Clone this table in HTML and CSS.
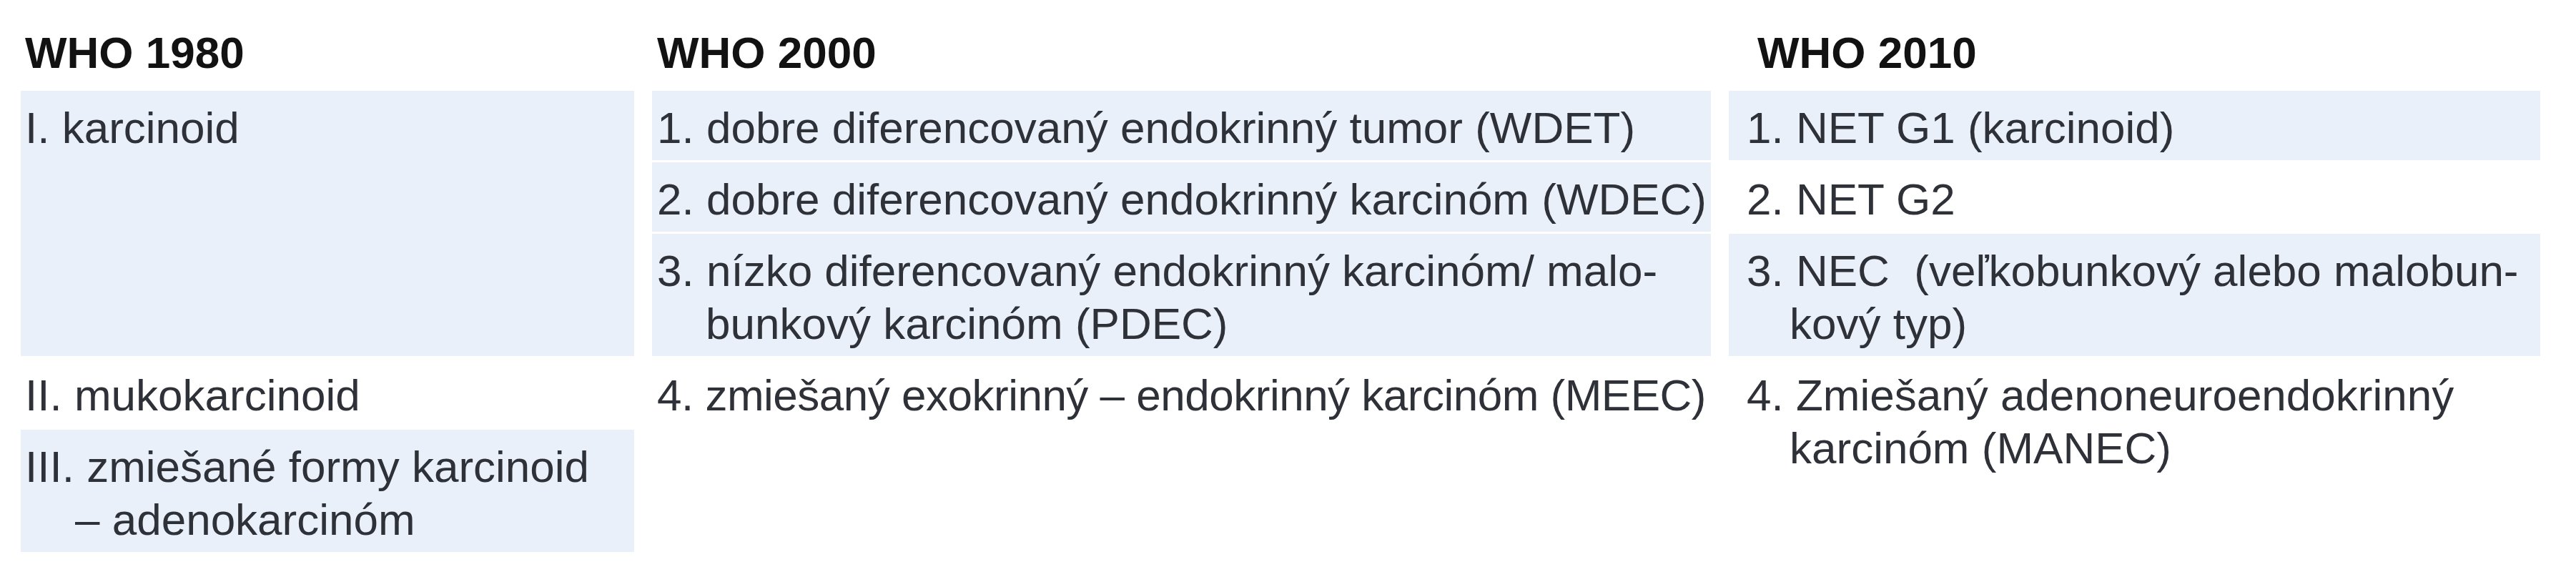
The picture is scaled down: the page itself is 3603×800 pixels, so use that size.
FILE: index.html
```html
<!DOCTYPE html>
<html lang="sk">
<head>
<meta charset="utf-8">
<title>WHO klasifikácia</title>
<link rel="stylesheet" href="styles.css">
</head>
<body>
<div class="table">
  <div class="cell head c1">WHO 1980</div>
  <div class="cell head c2">WHO 2000</div>
  <div class="cell head c3 c3h">WHO 2010</div>

  <div class="cell c1 shade span3">I. karcinoid</div>
  <div class="cell c2 shade">1. dobre diferencovaný endokrinný tumor (WDET)</div>
  <div class="cell c3 shade">1. NET G1 (karcinoid)</div>

  <div class="cell c2 shade">2. dobre diferencovaný endokrinný karcinóm (WDEC)</div>
  <div class="cell c3">2. NET G2</div>

  <div class="cell c2 shade hang">3. nízko diferencovaný endokrinný karcinóm/ malo-<br>bunkový karcinóm (PDEC)</div>
  <div class="cell c3 shade hang">3. NEC&nbsp; (veľkobunkový alebo malobun-<br>kový typ)</div>

  <div class="cell c1">II. mukokarcinoid</div>
  <div class="cell c2 tight">4. zmiešaný exokrinný – endokrinný karcinóm (MEEC)</div>
  <div class="cell c3 hang span2">4. Zmiešaný adenoneuroendokrinný<br>karcinóm (MANEC)</div>

  <div class="cell c1 shade hang1">III. zmiešané formy karcinoid<br>– adenokarcinóm</div>
  <div class="cell c2 empty"></div>
</div>
</body>
</html>
```
FILE: styles.css
```css
html, body {
  margin: 0;
  padding: 0;
  background: #ffffff;
}

.table {
  display: grid;
  grid-template-columns: 858px 1481px 1135px;
  column-gap: 25px;
  row-gap: 3px;
  padding: 37px 0 0 29px;
  font-family: "Liberation Sans", Arial, sans-serif;
  font-size: 62px;
  line-height: 74px;
  color: #2e3138;
}

.cell {
  padding: 15px 0 8px 0;
  white-space: nowrap;
}

.c1 { grid-column: 1; padding-left: 6px; }
.c2 { grid-column: 2; padding-left: 7px; }
.c3 { grid-column: 3; padding-left: 25px; }

.head {
  font-weight: bold;
  color: #121212;
  padding-top: 0;
  padding-bottom: 13px;
}

.c3h { padding-left: 40px; }

.shade {
  background: #e9f0f9;
}

.tight { letter-spacing: -0.5px; }

.span3 { grid-row: span 3; }
.span2 { grid-row: span 2; }

.hang {
  padding-left: calc(25px + 60px);
  text-indent: -60px;
}
.c2.hang {
  padding-left: calc(7px + 68px);
  text-indent: -68px;
}
.hang1 {
  padding-left: calc(6px + 70px);
  text-indent: -70px;
}
```
